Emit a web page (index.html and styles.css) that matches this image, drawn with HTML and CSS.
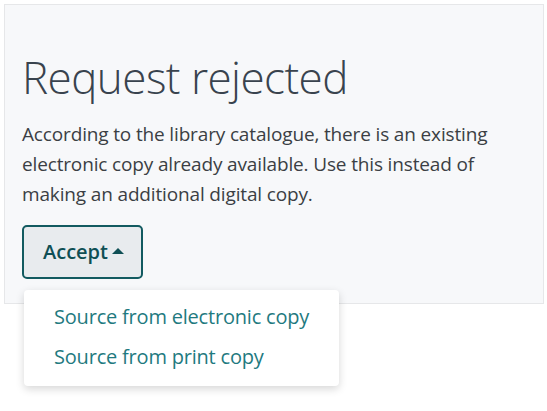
FILE: index.html
```html
<!DOCTYPE html>
<html lang="en">
<head>
<meta charset="utf-8">
<title>Request rejected</title>
<link rel="stylesheet" href="styles.css">
</head>
<body>
<section class="panel">
  <h1 class="title">Request rejected</h1>
  <p class="message">According to the library catalogue, there is an existing electronic copy already available. Use this instead of making an additional digital copy.</p>
  <div class="dropdown">
    <button class="toggle" type="button">Accept<span class="caret"></span></button>
    <ul class="menu">
      <li class="menu-item">Source from electronic copy</li>
      <li class="menu-item">Source from print copy</li>
    </ul>
  </div>
</section>
</body>
</html>
```

FILE: styles.css
```css
html, body {
  margin: 0;
  padding: 0;
  background: #ffffff;
}
html {
  height: 100%;
}
body {
  box-sizing: border-box;
  min-height: 411px;
  padding: 4px;
  font-family: "Open Sans", "Liberation Sans", sans-serif;
}
.panel {
  width: 521px;
  background: #f7f8fa;
  border: 1px solid #e6e7e9;
  padding: 45px 0 24px 17px;
}
.title {
  margin: 0;
  font-size: 44px;
  font-weight: 300;
  line-height: 54px;
  letter-spacing: -0.55px;
  color: #39434e;
}
.message {
  margin: 15px 0 16px;
  font-size: 19px;
  line-height: 30px;
  letter-spacing: -0.15px;
  color: #3b3f44;
  width: 480px;
}
.dropdown {
  position: relative;
  display: inline-block;
}
.toggle {
  display: flex;
  align-items: center;
  margin: 0;
  padding: 11px 17px 11px 19px;
  font-family: inherit;
  font-size: 20px;
  font-weight: 600;
  line-height: 28px;
  color: #0f4f55;
  background: #e8ebee;
  border: 2px solid #125a60;
  border-radius: 5px;
}
.caret {
  width: 0;
  height: 0;
  margin-left: 4px;
  margin-top: -2px;
  border-left: 6px solid transparent;
  border-right: 6px solid transparent;
  border-bottom: 6px solid #0f4f55;
}
.menu {
  position: absolute;
  top: 65px;
  left: 2px;
  width: 315px;
  margin: 0;
  padding: 7px 0 9px;
  list-style: none;
  background: #ffffff;
  border-radius: 4px;
  box-shadow: 0 3px 8px rgba(0, 0, 0, 0.16);
  z-index: 2;
}
.menu-item {
  padding: 0 30px;
  font-size: 20px;
  line-height: 40px;
  letter-spacing: -0.2px;
  color: #1f7a80;
  white-space: nowrap;
}
```
